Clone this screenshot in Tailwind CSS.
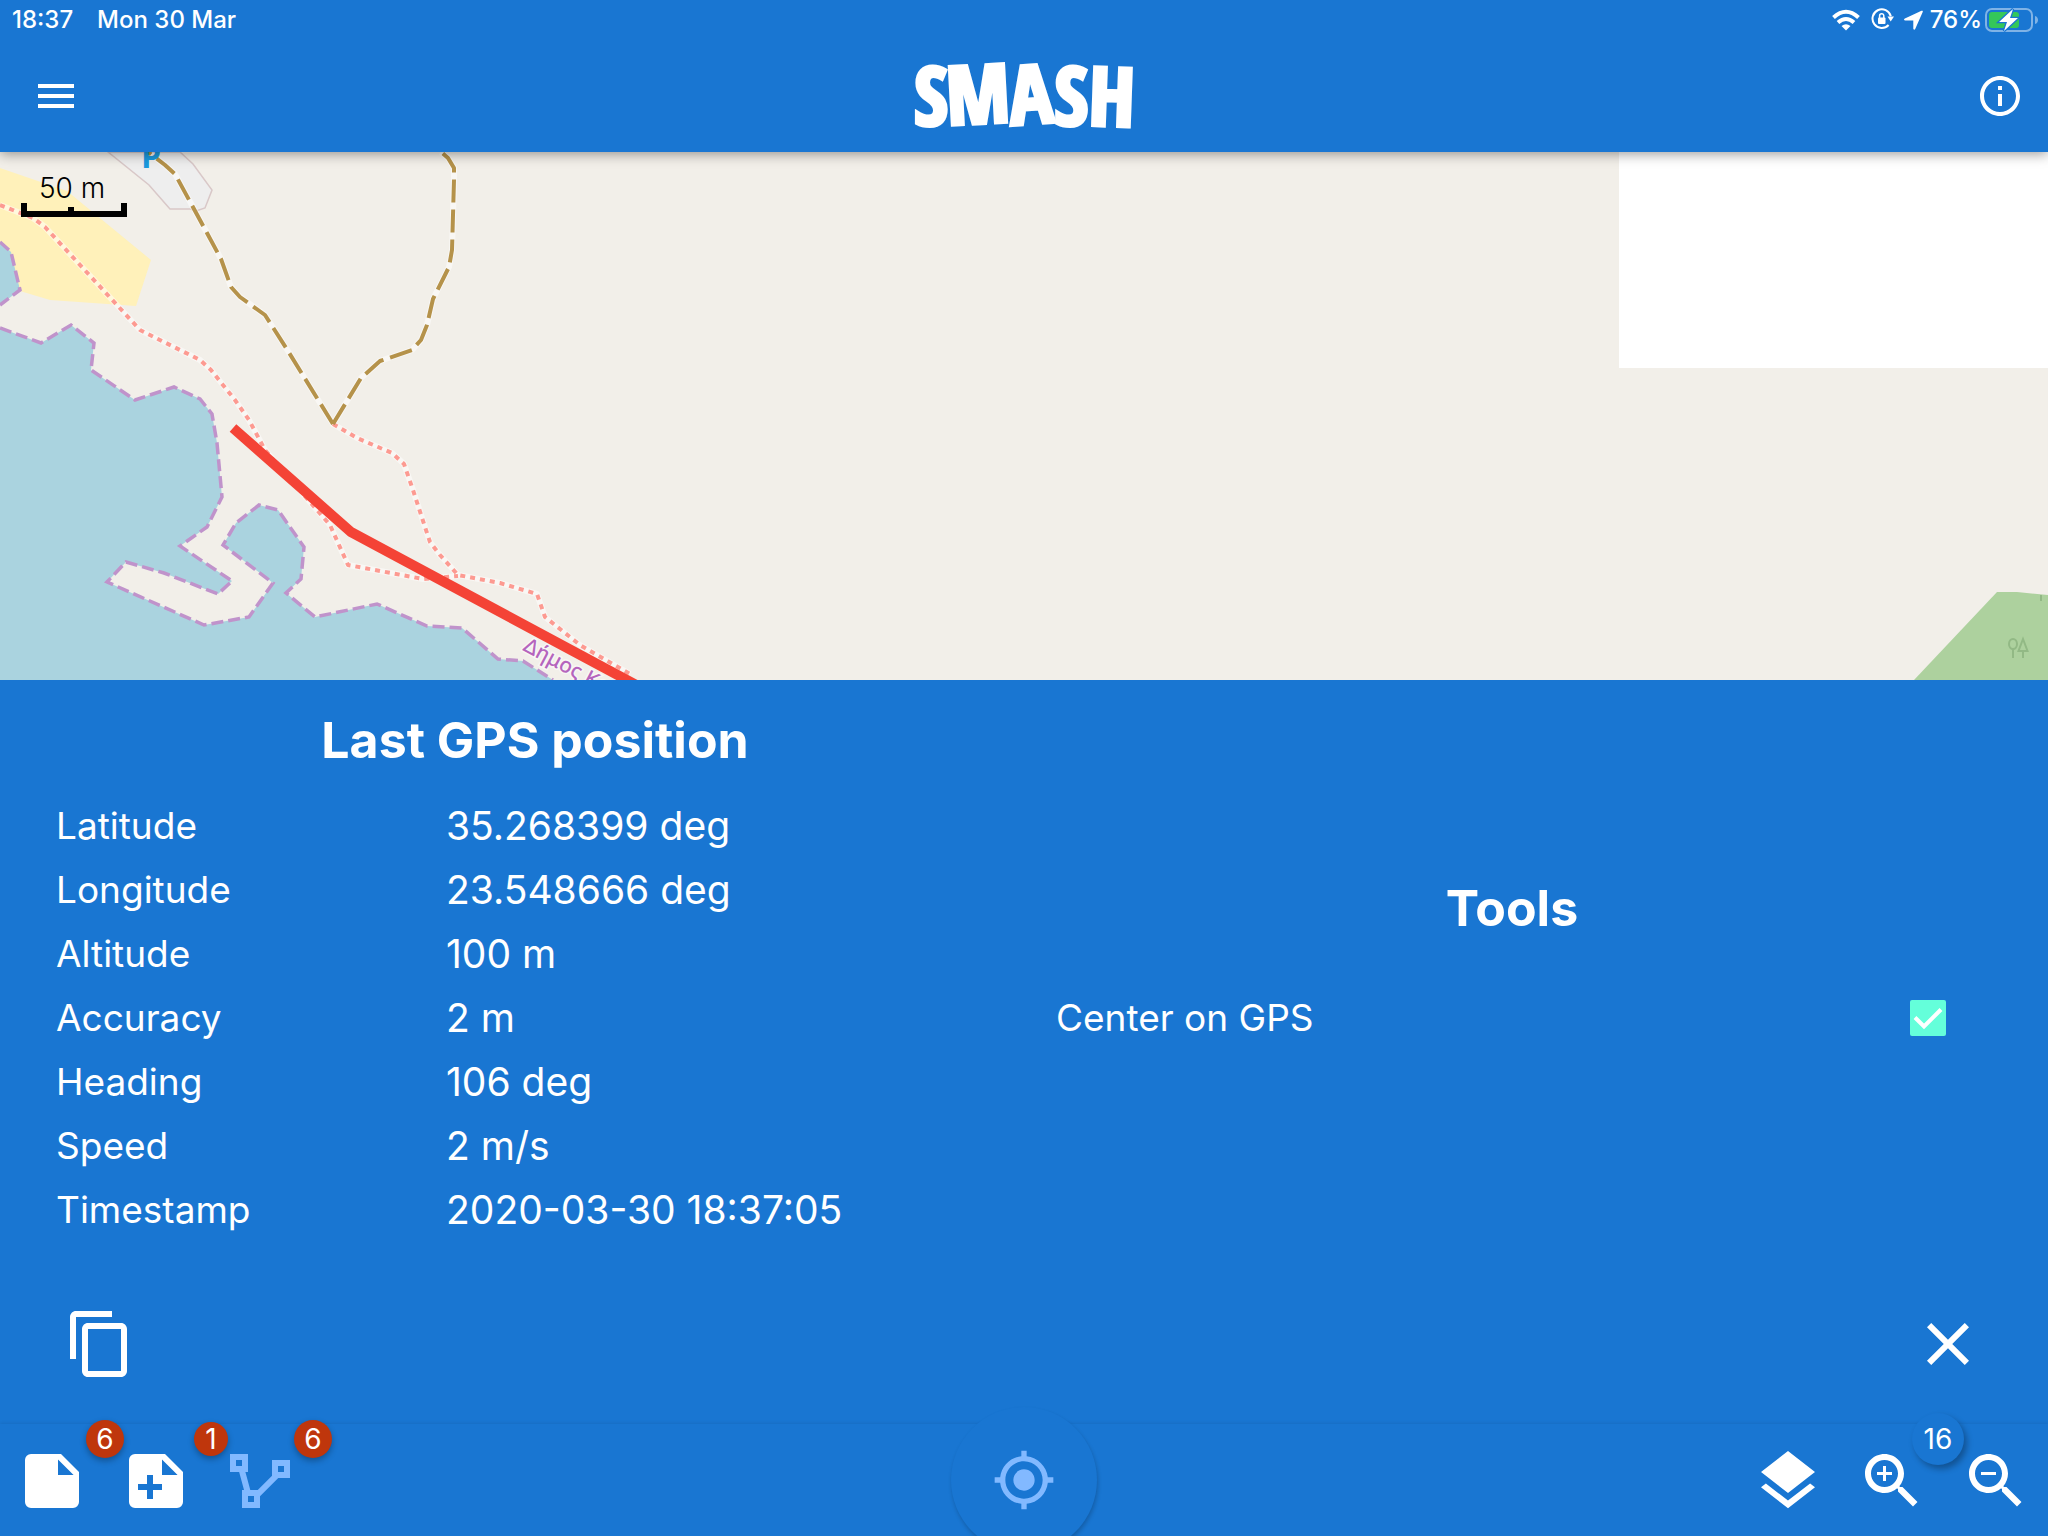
<!DOCTYPE html>
<html lang="en">
<head>
<meta charset="utf-8">
<meta name="viewport" content="width=device-width, initial-scale=1">
<title>SMASH</title>
<script src="https://cdn.jsdelivr.net/npm/@tailwindcss/browser@4"></script>
</head>
<body class="flex h-screen min-h-[1200px] flex-col overflow-hidden bg-[#1976d2] font-['Inter','Liberation_Sans',sans-serif] text-white">

<header class="relative z-10 bg-[#1976d2] shadow-[0_2px_12px_rgba(0,0,0,0.4)]">
  <!-- Device status -->
  <div class="flex h-10 items-center justify-between pr-[7px] pl-3 text-2xl font-medium">
    <div class="flex gap-6"><span>18:37</span><span>Mon 30 Mar</span></div>
    <div class="flex items-center gap-1">
      <div class="flex items-center gap-2">
        <svg class="h-6 w-8" viewBox="0 0 32 24" fill="none" stroke="#fff" stroke-width="4">
          <path d="M3.500 9.500Q16-2 28.500 9.500"/><path d="M8 14.500Q16 7.500 24 14.500"/><path d="M16 22.500l-4.500-4.500q4.500-3.500 9 0z" fill="#fff" stroke="none"/>
        </svg>
        <svg class="h-6 w-6" viewBox="0 0 24 24" fill="none" stroke="#fff" stroke-width="2">
          <path d="M20.800 8.200A9.300 9.300 0 1 0 18.600 17"/><path d="M17.500 8.500h6.500l-3.300 5z" fill="#fff" stroke="none"/>
          <rect x="8" y="9.500" width="7.500" height="6.500" rx="1" fill="#fff" stroke="none"/><path d="M9.600 10V7.800a2.100 2.100 0 0 1 4.200 0V10" stroke-width="1.500"/>
        </svg>
        <svg class="h-6 w-6" viewBox="0 0 24 24" fill="#fff"><path d="M19.500 2.800c1-.4 1.600.2 1.200 1.200L13.200 21c-.5 1.200-1.900 1-1.900-.4V12.600H3.300c-1.500 0-1.700-1.400-.4-2z"/></svg>
      </div>
      <div class="flex items-center gap-[3px]">
        <span>76%</span>
        <svg class="h-6 w-14" viewBox="0 0 56 24">
          <rect x="1" y="1" width="46" height="22" rx="6" fill="none" stroke="#fff" stroke-opacity=".45" stroke-width="2"/>
          <rect x="4" y="4" width="30" height="16" rx="3" fill="#34c759"/>
          <path d="M50 8c4 1 4 7 0 8z" fill="#fff" fill-opacity=".45"/>
          <path d="M28 1L14 14h8l-3 9L33 10h-8z" fill="#fff" stroke="#1976d2" stroke-width="2.500" paint-order="stroke"/>
        </svg>
      </div>
    </div>
  </div>
  <!-- App bar -->
  <div class="flex h-28 items-center justify-between pr-6 pl-8">
    <button aria-label="Menu"><svg class="size-12" viewBox="0 0 24 24" fill="#fff"><path d="M3 18h18v-2H3v2zm0-5h18v-2H3v2zm0-7v2h18V6H3z"/></svg></button>
    <svg class="h-28 w-64 overflow-visible" viewBox="0 0 256 112" role="img" aria-label="SMASH">
      <text x="124" y="85" text-anchor="middle" rotate="0 -3 -4 0 2" fill="#fff" stroke="#fff" stroke-width="4" class="font-['Liberation_Sans_Narrow','Open_Sans_Condensed','Lato',sans-serif] text-[81px] font-black">SMASH</text>
    </svg>
    <button aria-label="Info"><svg class="size-12" viewBox="0 0 24 24" fill="#fff"><path d="M11 7h2v2h-2zm0 4h2v6h-2zm1-9C6.480 2 2 6.480 2 12s4.480 10 10 10 10-4.480 10-10S17.520 2 12 2zm0 18c-4.410 0-8-3.590-8-8s3.590-8 8-8 8 3.590 8 8-3.590 8-8 8z"/></svg></button>
  </div>
</header>

<!-- Map -->
<main class="relative min-h-0 flex-1 overflow-hidden bg-[#f2efe9]">
  <svg class="absolute inset-0 size-full" viewBox="0 152 2048 528" preserveAspectRatio="xMinYMin slice" fill="none">
    <rect x="1619" y="152" width="429" height="216" fill="#fff"/>
    <path d="M0 168L67 191 151 260 136 306 50 300 20 291 0 260z" fill="#fff1ba"/>
    <path d="M108 152L149 185 170 209 190 209 196 211 205 208 212 190 193 164 180 152z" fill="#eee" stroke="#d9c8c8" stroke-width="1.500"/>
    <g fill="#aad3df">
      <path d="M0 242L11 252 20 290 0 305z"/>
      <path d="M0 328L41 343 71 325 94 343 91 370 135 400 174 387 200 399 212 414 217 443 222 497 207 527 180 546 232 581 218 594 164 573 126 562 107 582 204 625 249 617 273 583 223 545 236 523 259 505 278 510 304 547 301 579 286 593 315 617 377 604 427 626 462 628 498 659 523 661 553 680V700H0z"/>
    </g>
    <g stroke="#c093cb" stroke-width="3.500" stroke-dasharray="12 5">
      <path d="M0 242L11 252 20 290 0 305"/>
      <path d="M0 328L41 343 71 325 94 343 91 370 135 400 174 387 200 399 212 414 217 443 222 497 207 527 180 546 232 581 218 594 164 573 126 562 107 582 204 625 249 617 273 583 223 545 236 523 259 505 278 510 304 547 301 579 286 593 315 617 377 604 427 626 462 628 498 659 523 661 553 680"/>
    </g>
    <g stroke-linejoin="round">
      <g stroke="#fff" stroke-opacity=".5" stroke-width="6">
        <path d="M0 205L33 218 45 227 140 330 200 360 211 370 235 400 249 420 265 450 330 525 348 565 423 579 458 576"/>
        <path d="M333 424L357 438 378 447 392 453 404 464 413 490 425 527 430 542 440 555 458 575 500 583 537 594 545 617 580 645 630 674"/>
        <path d="M148 152L165 165 175 174 194 209 207 233 221 259 231 287 240 297 265 315 288 351 333 424 361 378 380 361 412 350 421 340 427 325 433 299 449 267 452 250 454 180 454 168 448 158 441 152"/>
      </g>
      <g stroke="#fd9a91" stroke-width="4" stroke-dasharray="5 5">
        <path d="M0 205L33 218 45 227 140 330 200 360 211 370 235 400 249 420 265 450 330 525 348 565 423 579 458 576"/>
        <path d="M333 424L357 438 378 447 392 453 404 464 413 490 425 527 430 542 440 555 458 575 500 583 537 594 545 617 580 645 630 674"/>
      </g>
      <g stroke="#b5924a" stroke-width="4" stroke-dasharray="23 7">
        <path d="M333 424L288 351 265 315 240 297 231 287 221 259 207 233 194 209 175 174 165 165 148 152"/>
        <path d="M333 424L361 378 380 361 412 350 421 340 427 325 433 299 449 267 452 250 454 180 454 168 448 158 441 152"/>
      </g>
    </g>
    <text x="141" y="168" fill="#1b9ade" class="font-['Open_Sans',sans-serif] text-[32px] font-bold">P</text>
    <text transform="translate(522 650) rotate(28)" fill="#b565bd" stroke="#fff" stroke-opacity=".5" stroke-width="3" paint-order="stroke" class="font-['Noto_Sans',sans-serif] text-[21px] font-medium">Δήμος Κα</text>
    <path d="M233 428L351 532 640 687" stroke="#f44336" stroke-width="10"/>
    <path d="M1914 680L1997 592 2017 592 2048 595V680z" fill="#add19e"/>
    <g stroke="#92b985" stroke-width="2"><ellipse cx="2013" cy="644" rx="4" ry="5"/><path d="M2013 649v9M2023 639l-4.500 12h9zM2023 651v7M2041 595v6"/></g>
  </svg>
  <!-- Scale bar -->
  <div class="relative ml-[21px] w-[106px] pt-[22px] text-center text-black">
    <div class="pr-1 text-[28px] leading-[29px] font-light">50 m</div>
    <svg class="block h-[14px] w-full" viewBox="0 0 106 14"><path d="M0 0h6v8h41v-4h6v4h47v-8h6v14h-106z" fill="#000"/></svg>
  </div>
</main>

<section class="relative bg-[#1976d2]">
  <div class="grid grid-cols-2 pt-6">
    <div class="pr-[10px] pl-14">
      <h2 class="text-center text-[50px] leading-[72px] font-bold">Last GPS position</h2>
      <table class="mt-[18px] w-full table-fixed text-left text-[39px] leading-[64px]">
        <tbody>
          <tr><th scope="row" class="h-16 w-[390px] p-0 text-[37px] leading-[64px] font-normal">Latitude</th><td class="p-0">35.268399 deg</td></tr>
          <tr><th scope="row" class="h-16 p-0 text-[37px] leading-[64px] font-normal">Longitude</th><td class="p-0">23.548666 deg</td></tr>
          <tr><th scope="row" class="h-16 p-0 text-[37px] leading-[64px] font-normal">Altitude</th><td class="p-0">100 m</td></tr>
          <tr><th scope="row" class="h-16 p-0 text-[37px] leading-[64px] font-normal">Accuracy</th><td class="p-0">2 m</td></tr>
          <tr><th scope="row" class="h-16 p-0 text-[37px] leading-[64px] font-normal">Heading</th><td class="p-0">106 deg</td></tr>
          <tr><th scope="row" class="h-16 p-0 text-[37px] leading-[64px] font-normal">Speed</th><td class="p-0">2 m/s</td></tr>
          <tr><th scope="row" class="h-16 p-0 text-[37px] leading-[64px] font-normal">Timestamp</th><td class="p-0">2020-03-30 18:37:05</td></tr>
        </tbody>
      </table>
    </div>
    <div class="flex flex-col justify-center pr-20 pb-6 pl-8">
      <h2 class="text-center text-[50px] leading-[72px] font-bold">Tools</h2>
      <div class="mt-[42px] flex items-center justify-between pr-[22px]">
        <label for="center" class="text-[37px] leading-[64px]">Center on GPS</label>
        <span class="grid">
          <input id="center" type="checkbox" checked class="col-start-1 row-start-1 size-9 appearance-none rounded-xs bg-[#64ffda]">
          <svg class="pointer-events-none col-start-1 row-start-1 size-9" viewBox="0 0 36 36" fill="none" stroke="#fff" stroke-width="4"><path d="M5 17.500l9 9L31 9.500"/></svg>
        </span>
      </div>
    </div>
  </div>
  <div class="flex justify-between px-16 pt-[66px] pb-11">
    <button aria-label="Copy position"><svg class="size-[72px]" viewBox="0 0 24 24" fill="#fff"><path d="M16 1H4c-1.100 0-2 .9-2 2v14h2V3h12V1zm3 4H8c-1.100 0-2 .9-2 2v14c0 1.100.9 2 2 2h11c1.100 0 2-.9 2-2V7c0-1.100-.9-2-2-2zm0 16H8V7h11v14z"/></svg></button>
    <button aria-label="Close"><svg class="size-[72px]" viewBox="0 0 24 24" fill="#fff"><path d="M19 6.410L17.590 5 12 10.590 6.410 5 5 6.410 10.590 12 5 17.590 6.410 19 12 13.410 17.590 19 19 17.590 13.410 12z"/></svg></button>
  </div>
</section>

<nav class="relative flex h-28 shrink-0 items-center justify-between bg-[#1976d2] px-4 pt-0.5 shadow-[0_-1px_3px_rgba(0,0,0,0.08)]">
  <div class="flex gap-8">
    <button class="relative" aria-label="Notes">
      <svg class="size-[72px]" viewBox="0 0 24 24"><path d="M5 3h10l6 6v10a2 2 0 0 1-2 2H5a2 2 0 0 1-2-2V5a2 2 0 0 1 2-2zM14 4.800V10h5.200z" fill="#fff" fill-rule="evenodd"/></svg>
      <span class="absolute -top-[25px] left-[70px] flex size-[38px] items-center justify-center rounded-full bg-[#bf360c] text-[28px] shadow-[0_3px_6px_rgba(0,0,0,0.3)]">6</span>
    </button>
    <button class="relative" aria-label="Add note">
      <svg class="size-[72px]" viewBox="0 0 24 24"><path d="M5 3h10l6 6v10a2 2 0 0 1-2 2H5a2 2 0 0 1-2-2V5a2 2 0 0 1 2-2zM14 4.800V10h5.200zM9 10v3H6v2h3v3h2v-3h3v-2h-3v-3z" fill="#fff" fill-rule="evenodd"/></svg>
      <span class="absolute -top-[23px] left-[74px] flex size-[34px] items-center justify-center rounded-full bg-[#bf360c] text-[28px] shadow-[0_3px_6px_rgba(0,0,0,0.3)]">1</span>
    </button>
    <button class="relative" aria-label="Logs">
      <svg class="size-[72px]" viewBox="0 0 24 24" fill="none" stroke="#82b9ff" stroke-width="2"><path d="M3 4h4v4H3zM17 6h4v4h-4zM7 16h4v4H7zM5.900 8.300l1.900 7M17.800 9.900l-6.500 6.500"/></svg>
      <span class="absolute -top-[25px] left-[70px] flex size-[38px] items-center justify-center rounded-full bg-[#bf360c] text-[28px] shadow-[0_3px_6px_rgba(0,0,0,0.3)]">6</span>
    </button>
  </div>
  <button class="absolute -top-[17px] left-1/2 flex size-[146px] -translate-x-1/2 items-center justify-center rounded-full bg-[#1976d2] shadow-[1px_3px_4px_rgba(0,0,0,0.2)]" aria-label="Center on position">
    <svg class="size-16" viewBox="0 0 24 24" fill="#82b9ff"><path d="M12 8c-2.210 0-4 1.790-4 4s1.790 4 4 4 4-1.790 4-4-1.790-4-4-4zm8.940 3c-.46-4.170-3.770-7.480-7.940-7.940V1h-2v2.060C6.830 3.520 3.520 6.830 3.060 11H1v2h2.060c.46 4.170 3.770 7.480 7.940 7.940V23h2v-2.060c4.170-.46 7.480-3.770 7.940-7.940H23v-2h-2.060zM12 19c-3.870 0-7-3.130-7-7s3.130-7 7-7 7 3.130 7 7-3.130 7-7 7z"/></svg>
  </button>
  <div class="flex gap-8">
    <button aria-label="Layers"><svg class="size-[72px]" viewBox="0 0 24 24" fill="#fff"><path d="M11.990 18.540l-7.370-5.730L3 14.070l9 7 9-7-1.630-1.270-7.380 5.740zM12 16l7.360-5.730L21 9l-9-7-9 7 1.630 1.270L12 16z"/></svg></button>
    <button class="relative" aria-label="Zoom in">
      <svg class="size-[72px]" viewBox="0 0 24 24" fill="#fff"><path d="M15.500 14h-.79l-.28-.27C15.410 12.590 16 11.110 16 9.500 16 5.910 13.090 3 9.500 3S3 5.910 3 9.500 5.910 16 9.500 16c1.610 0 3.090-.59 4.230-1.570l.27.28v.79l5 4.990L20.490 19l-4.990-5zm-6 0C7.010 14 5 11.990 5 9.500S7.010 5 9.500 5 14 7.010 14 9.500 11.990 14 9.500 14zM12 10h-2v2H9v-2H7V9h2V7h1v2h2v1z"/></svg>
      <span class="absolute -top-8 left-14 flex size-[52px] items-center justify-center rounded-full bg-[#1976d2] text-[28px] shadow-[3px_4px_6px_rgba(0,0,0,0.3)]">16</span>
    </button>
    <button aria-label="Zoom out"><svg class="size-[72px]" viewBox="0 0 24 24" fill="#fff"><path d="M15.500 14h-.79l-.28-.27C15.410 12.590 16 11.110 16 9.500 16 5.910 13.090 3 9.500 3S3 5.910 3 9.500 5.910 16 9.500 16c1.610 0 3.090-.59 4.230-1.570l.27.28v.79l5 4.990L20.490 19l-4.990-5zm-6 0C7.010 14 5 11.990 5 9.500S7.010 5 9.500 5 14 7.010 14 9.500 11.990 14 9.500 14zM7 9h5v1H7z"/></svg></button>
  </div>
</nav>
</body>
</html>
